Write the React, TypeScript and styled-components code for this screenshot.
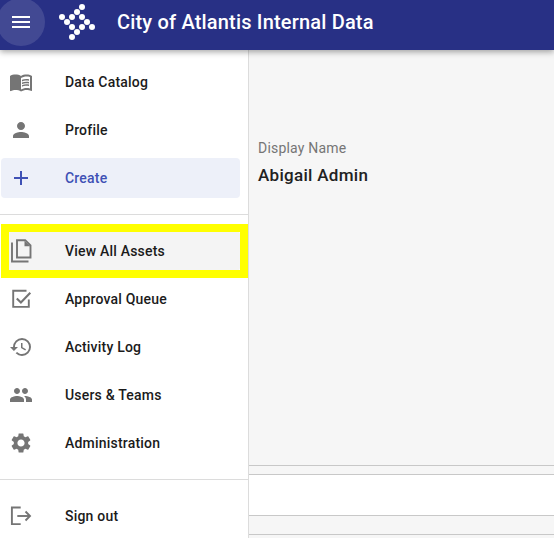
import React from "react";
import styled, { createGlobalStyle } from "styled-components";
import { MdMenu, MdMenuBook, MdPerson, MdAdd, MdHistory, MdPeople, MdSettings } from "react-icons/md";

const Global = createGlobalStyle`
  html, body { margin: 0; padding: 0; height: 100%; overflow: hidden; }
  body { font-family: Roboto, "Liberation Sans", sans-serif; background: #fff; }
  * { box-sizing: border-box; }
`;

const Page = styled.div`
  width: 554px;
  height: 538px;
  display: grid;
  grid-template-rows: 50px 1fr;
  overflow: hidden;
`;
const Header = styled.header`
  display: flex;
  align-items: center;
  background: #283085;
  box-shadow: 0 2px 6px rgba(0, 0, 0, 0.35);
  position: relative;
  z-index: 2;
`;
const MenuButton = styled.button`
  width: 48px;
  height: 48px;
  margin: -6px 0 0 -3px;
  flex: none;
  border: 0;
  padding: 0;
  border-radius: 50%;
  background: rgba(255, 255, 255, 0.12);
  color: #fff;
  display: flex;
  align-items: center;
  justify-content: center;
`;
const Logo = styled.svg`
  width: 40px;
  height: 40px;
  margin: -6px 0 0 14px;
  flex: none;
`;
const Title = styled.h1`
  margin: -6px 0 0 18px;
  font-size: 20px;
  line-height: 24px;
  font-weight: 500;
  color: #fff;
  letter-spacing: 0.18px;
  white-space: nowrap;
`;
const Body = styled.div`
  display: grid;
  grid-template-columns: 249px 1fr;
  min-height: 0;
`;
const Sidebar = styled.nav`
  border-right: 1px solid #dcdcdc;
  background: #fff;
  padding-top: 8px;
`;
const Divider = styled.hr<{ $before: number; $after: number }>`
  border: 0;
  height: 1px;
  background: #dcdcdc;
  margin: ${(p) => p.$before}px 0 ${(p) => p.$after}px;
`;
const Item = styled.div`
  position: relative;
  height: 48px;
  padding: 4px 8px 4px 1px;
`;
const Pill = styled.div<{ $tone?: "create" | "hover" }>`
  height: 40px;
  display: flex;
  align-items: center;
  border-radius: 4px;
  background: ${(p) => (p.$tone === "create" ? "#edf0f9" : p.$tone === "hover" ? "#f4f4f4" : "transparent")};
  color: ${(p) => (p.$tone === "create" ? "#3f51b5" : "#1b1b1b")};
`;
const IconSlot = styled.span<{ $blue?: boolean }>`
  width: 40px;
  flex: none;
  display: flex;
  justify-content: center;
  color: ${(p) => (p.$blue ? "#3f51b5" : "#757575")};
`;
const Label = styled.span`
  margin-left: 24px;
  font-size: 14px;
  line-height: 20px;
  font-weight: 500;
  letter-spacing: 0.2px;
  white-space: nowrap;
`;
const Highlight = styled.div`
  position: absolute;
  left: 1px;
  right: 0;
  top: -3px;
  bottom: -3px;
  border: 8px solid #ffff00;
  pointer-events: none;
`;
const Main = styled.main`
  display: flex;
  flex-direction: column;
  background: #f6f6f6;
  min-width: 0;
`;
const Profile = styled.section`
  height: 416px;
  padding: 88px 9px 0;
  border-bottom: 1px solid #c8c8c8;
`;
const FieldLabel = styled.div`
  font-size: 14px;
  line-height: 20px;
  color: #757575;
  letter-spacing: 0.2px;
`;
const FieldValue = styled.div`
  margin-top: 7px;
  font-size: 17px;
  line-height: 20px;
  font-weight: 500;
  color: #212121;
  letter-spacing: 0.3px;
`;
const Band = styled.div<{ $h: number; $white?: boolean }>`
  height: ${(p) => p.$h}px;
  flex: none;
  background: ${(p) => (p.$white ? "#fff" : "#f6f6f6")};
  border-bottom: 1px solid #c8c8c8;
`;

const dots: [number, number][] = [
  [23, 5], [18, 10], [3, 15], [13, 15], [23, 15], [8, 20], [28, 20], [13, 25], [23, 25], [33, 25], [18, 30], [13, 35],
];

const StrokeIcon = ({ children }: { children: React.ReactNode }) => (
  <svg width="24" height="24" viewBox="0 0 24 24" fill="none" stroke="currentColor" strokeWidth="1.9">
    {children}
  </svg>
);

const SignOutIcon = () => (
  <StrokeIcon>
    <path d="M11.7 3.5H2.9v16.6h8.8" />
    <path d="M8.3 12h12.6" />
    <path d="M16.5 7.5 21 12l-4.500 4.500" />
  </StrokeIcon>
);
const AssetsIcon = () => (
  <StrokeIcon>
    <path d="M8 1.200h8.200l5.300 5.300v12H8z" />
    <path d="M15.500 1.800v5.400h5.600l-5.600-5.400z" fill="currentColor" stroke="none" />
    <path d="M3 3.500v19h16.500" />
  </StrokeIcon>
);
const ApprovalIcon = () => (
  <StrokeIcon>
    <path d="M17.500 3.700H4.200v16.200h15.600v-7.400" />
    <path d="m7.800 11.500 4.100 4.100 9.400-9.800" strokeWidth="2.100" />
  </StrokeIcon>
);

const top = [
  { label: "Data Catalog", icon: <MdMenuBook size={24} /> },
  { label: "Profile", icon: <MdPerson size={24} /> },
];
const mid = [
  { label: "Approval Queue", icon: <ApprovalIcon /> },
  { label: "Activity Log", icon: <MdHistory size={24} /> },
  { label: "Users & Teams", icon: <MdPeople size={24} /> },
  { label: "Administration", icon: <MdSettings size={24} /> },
];

const Row = ({ label, icon }: { label: string; icon: React.ReactNode }) => (
  <Item>
    <Pill>
      <IconSlot>{icon}</IconSlot>
      <Label>{label}</Label>
    </Pill>
  </Item>
);

export default function App() {
  return (
    <Page>
      <Global />
      <Header>
        <MenuButton aria-label="Menu"><MdMenu size={24} /></MenuButton>
        <Logo viewBox="0 0 40 40">
          {dots.map(([x, y]) => <circle key={`${x}-${y}`} cx={x} cy={y} r="3" fill="#fff" />)}
        </Logo>
        <Title>City of Atlantis Internal Data</Title>
      </Header>
      <Body>
        <Sidebar>
          {top.map((r) => <Row key={r.label} {...r} />)}
          <Item>
            <Pill $tone="create">
              <IconSlot $blue><MdAdd size={24} /></IconSlot>
              <Label>Create</Label>
            </Pill>
          </Item>
          <Divider $before={12} $after={12} />
          <Item>
            <Pill $tone="hover">
              <IconSlot><AssetsIcon /></IconSlot>
              <Label>View All Assets</Label>
            </Pill>
            <Highlight />
          </Item>
          {mid.map((r) => <Row key={r.label} {...r} />)}
          <Divider $before={12} $after={12} />
          <Row label="Sign out" icon={<SignOutIcon />} />
        </Sidebar>
        <Main>
          <Profile>
            <FieldLabel>Display Name</FieldLabel>
            <FieldValue>Abigail Admin</FieldValue>
          </Profile>
          <Band $h={9} />
          <Band $h={41} $white />
          <Band $h={19} />
        </Main>
      </Body>
    </Page>
  );
}
